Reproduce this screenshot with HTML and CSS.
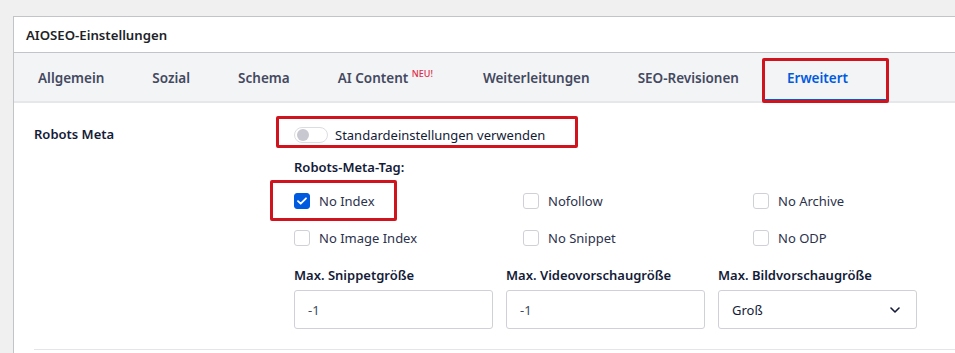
FILE: index.html
```html
<!DOCTYPE html>
<html>
    <head>
        <title>AIOSEO-Einstellungen</title>
        <link rel="stylesheet" href="styles.css">
    </head>
    <body>
        <div class="card">
            <div class="card-header">AIOSEO-Einstellungen</div>
            <div class="tabs">
                <div class="tab">Allgemein</div>
                <div class="tab">Sozial</div>
                <div class="tab">Schema</div>
                <div class="tab">AI Content <span class="new">NEU!</span></div>
                <div class="tab">Weiterleitungen</div>
                <div class="tab">SEO-Revisionen</div>
                <div class="tab active marked">Erweitert</div>
            </div>
            <div class="setting">
                <div class="setting-label">Robots Meta</div>
                <div class="setting-body">
                    <div class="toggle-row marked">
                        <span class="toggle"><span class="knob"></span></span>
                        <span>Standardeinstellungen verwenden</span>
                    </div>
                    <div class="sub-title">Robots-Meta-Tag:</div>
                    <div class="checks">
                        <label class="check marked"><span class="box checked"><svg width="10" height="8" viewBox="0 0 10 8"><path d="M1 4.2 L3.7 6.7 L9 1.3" fill="none" stroke="#fff" stroke-width="1.8" stroke-linecap="round" stroke-linejoin="round"/></svg></span>No Index</label>
                        <label class="check"><span class="box"></span>Nofollow</label>
                        <label class="check"><span class="box"></span>No Archive</label>
                        <label class="check"><span class="box"></span>No Image Index</label>
                        <label class="check"><span class="box"></span>No Snippet</label>
                        <label class="check"><span class="box"></span>No ODP</label>
                    </div>
                    <div class="fields">
                        <div class="field">
                            <div class="field-label">Max. Snippetgröße</div>
                            <div class="input">-1</div>
                        </div>
                        <div class="field">
                            <div class="field-label">Max. Videovorschaugröße</div>
                            <div class="input">-1</div>
                        </div>
                        <div class="field">
                            <div class="field-label">Max. Bildvorschaugröße</div>
                            <div class="input select">Groß
                                <svg width="10" height="6" viewBox="0 0 10 6"><path d="M1 1 L5 5 L9 1" fill="none" stroke="#141b38" stroke-width="1.6" stroke-linecap="round" stroke-linejoin="round"/></svg>
                            </div>
                        </div>
                    </div>
                </div>
            </div>
            <div class="divider"></div>
        </div>
    </body>
</html>
```
FILE: styles.css
```css
html {
    overflow: hidden;
}
body {
    margin: 0;
    padding: 16px 0 0 13px;
    background-color: #f0f0f1;
    font-family: "Noto Sans", "Open Sans", sans-serif;
    font-size: 13px;
    color: #141b38;
}
.card {
    background-color: #fff;
    border: 1px solid #c3c4c7;
    border-right: none;
    border-bottom: none;
    height: 336px;
    overflow: hidden;
}
.card-header {
    height: 35px;
    padding-left: 12px;
    line-height: 36px;
    font-size: 13.2px;
    font-weight: 600;
    color: #1d2327;
    border-bottom: 1px solid #c3c4c7;
}
.tabs {
    display: flex;
    height: 48px;
    background-color: #f3f4f5;
    border-bottom: 2px solid #e6e7ea;
}
.tab {
    position: relative;
    padding: 0 24px;
    line-height: 50px;
    font-size: 13.5px;
    font-weight: 600;
    color: #434960;
}
.tab:nth-child(4) {
    padding-right: 26px;
}
.tab .new {
    position: relative;
    top: -6px;
    color: #df2a4a;
    font-size: 9px;
    font-weight: 500;
    line-height: 0;
}
.tab.active {
    color: #005ae0;
    padding-right: 40px;
    box-shadow: inset 0 -2px 0 #005ae0;
}
.marked {
    position: relative;
}
.marked::after {
    content: "";
    position: absolute;
    border: 3px solid #d0141d;
    border-radius: 2px;
    pointer-events: none;
}
.tab.marked::after {
    left: -1px;
    right: -1px;
    top: 5px;
    bottom: -2px;
}
.setting {
    display: flex;
    padding-top: 20px;
}
.setting-label {
    width: 260px;
    padding-left: 20px;
    font-weight: 600;
    line-height: 22px;
}
.setting-body {
    width: 630px;
}
.toggle-row {
    display: flex;
    align-items: center;
    gap: 7px;
    height: 24px;
}
.toggle-row.marked::after {
    left: -18px;
    top: -7px;
    width: 296px;
    height: 26px;
}
.toggle {
    width: 28px;
    height: 14px;
    border: 1px solid #dcdde1;
    border-radius: 8px;
    background-color: #fff;
    display: flex;
    align-items: center;
    padding: 0 2px;
}
.knob {
    width: 12px;
    height: 12px;
    border-radius: 50%;
    background-color: #c8c9d0;
}
.sub-title {
    font-weight: 600;
    margin-top: 9px;
    line-height: 22px;
}
.checks {
    display: grid;
    grid-template-columns: 229px 230px 170px;
    row-gap: 15px;
    margin-top: 12px;
}
.check {
    display: flex;
    align-items: center;
    gap: 9px;
    height: 22px;
    color: #2c324c;
}
.check.marked {
    width: fit-content;
}
.check.marked::after {
    left: -24px;
    right: -22px;
    top: -10px;
    bottom: -9px;
}
.box {
    width: 14px;
    height: 14px;
    border: 1px solid #d0d1d7;
    border-radius: 3px;
    display: flex;
    align-items: center;
    justify-content: center;
}
.box.checked {
    background-color: #005ae0;
    border-color: #005ae0;
}
.fields {
    display: grid;
    grid-template-columns: 199px 199px 199px;
    column-gap: 13px;
    margin-top: 15px;
}
.field-label {
    font-weight: 600;
    line-height: 22px;
    margin-bottom: 4px;
}
.input {
    height: 37px;
    border: 1px solid #d0d1d7;
    border-radius: 3px;
    padding: 0 13px;
    display: flex;
    align-items: center;
    justify-content: space-between;
    color: #434960;
}
.input.select {
    color: #141b38;
    padding-right: 16px;
}
.divider {
    margin: 20px 0 0 20px;
    border-top: 1px solid #e4e5e9;
}
```
